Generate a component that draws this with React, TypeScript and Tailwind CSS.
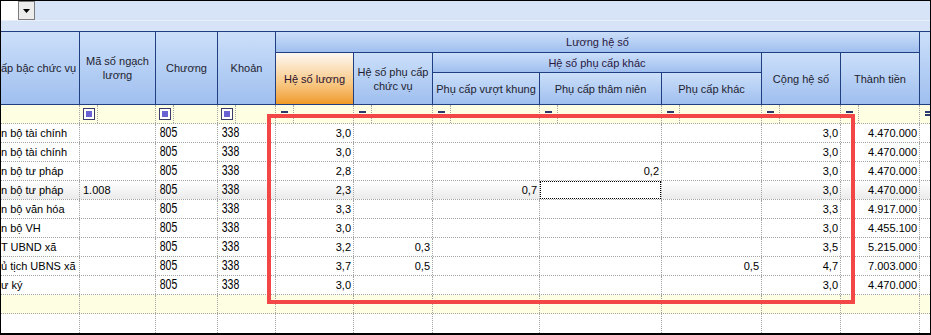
import React from "react";

const W = [
  "w-[79px]",
  "w-[76px]",
  "w-[62px]",
  "w-[58px]",
  "w-[78px]",
  "w-[79px]",
  "w-[107px]",
  "w-[122px]",
  "w-[100px]",
  "w-[79px]",
  "w-[79px]",
];

type Row = {
  name: string;
  ma?: string;
  hsl: string;
  pccv?: string;
  vk?: string;
  tn?: string;
  khac?: string;
  cong: string;
  tien: string;
};

const rows: Row[] = [
  { name: "n bộ tài chính", hsl: "3,0", cong: "3,0", tien: "4.470.000" },
  { name: "n bộ tài chính", hsl: "3,0", cong: "3,0", tien: "4.470.000" },
  { name: "n bộ tư pháp", hsl: "2,8", tn: "0,2", cong: "3,0", tien: "4.470.000" },
  { name: "n bộ tư pháp", ma: "1.008", hsl: "2,3", vk: "0,7", cong: "3,0", tien: "4.470.000" },
  { name: "n bộ văn hóa", hsl: "3,3", cong: "3,3", tien: "4.917.000" },
  { name: "n bộ VH", hsl: "3,0", cong: "3,0", tien: "4.455.100" },
  { name: "T UBND xã", hsl: "3,2", pccv: "0,3", cong: "3,5", tien: "5.215.000" },
  { name: "ủ tịch UBNS xã", hsl: "3,7", pccv: "0,5", khac: "0,5", cong: "4,7", tien: "7.003.000" },
  { name: "ư ký", hsl: "3,0", cong: "3,0", tien: "4.470.000" },
];

const DOT = "border-dotted border-[#a4a4a4]";
const HB =
  "flex items-center justify-center text-center leading-[14px] bg-linear-to-b from-[#cbdff9] to-[#a0bfef] text-[#1e1e30]";

function CheckIcon() {
  return (
    <div className="w-[12px] h-[12px] border border-[#3c3c6a] bg-white flex items-center justify-center">
      <div className="w-[6px] h-[6px] bg-[#6a62d2]" />
    </div>
  );
}

function EqIcon() {
  return (
    <div className="flex flex-col gap-px mt-[-1px]">
      <div className="w-[7px] h-[2px] bg-[#2a3a6e]" />
      <div className="w-[7px] h-[2px] bg-[#2a3a6e]" />
    </div>
  );
}

function FilterCell({ w, icon }: { w: string; icon: "check" | "eq" }) {
  return (
    <div className={`${w} h-full shrink-0 flex border-r ${DOT}`}>
      <div className={`w-[18px] h-full flex items-center justify-center border-r ${DOT}`}>
        {icon === "check" ? <CheckIcon /> : <EqIcon />}
      </div>
    </div>
  );
}

function Num({ w, v }: { w: string; v?: string }) {
  return (
    <div className={`${w} h-full shrink-0 flex items-center justify-end pr-[2px] border-r ${DOT}`}>
      {v}
    </div>
  );
}

function Tall({ w, v }: { w: string; v: string }) {
  return (
    <div className={`${w} h-full shrink-0 border-r ${DOT}`}>
      <div className="text-[14px] leading-[14px] pt-px pl-[5px] scale-x-75 origin-left">{v}</div>
    </div>
  );
}

export default function App() {
  return (
    <div
      className="relative w-[931px] h-[335px] bg-white border border-black border-b-2 overflow-hidden text-[11px] text-black"
      style={{ fontFamily: '"Liberation Sans", Arial, sans-serif' }}
    >
      {/* toolbar strip */}
      <div className="h-[30px] bg-[#d7e4f7] flex flex-col">
        <div className="h-[19px] flex">
          <div className="w-[17px] h-full bg-white" />
          <div className="w-[17px] h-full border border-[#7c7c7c] bg-[#ececec] flex items-center justify-center">
            <svg width="7" height="4" viewBox="0 0 7 4">
              <polygon points="0,0 7,0 3.5,4" fill="#000" />
            </svg>
          </div>
        </div>
        <div className="h-px bg-[#e9f0fa]" />
      </div>

      {/* header */}
      <div className="grid grid-cols-[78px_75px_61px_57px_77px_78px_106px_121px_99px_78px_78px_10px] grid-rows-[20px_19px_31px] gap-px bg-[#1f3f80] py-px">
        <div className={`${HB} col-start-1 row-start-1 row-span-3 justify-start! text-left whitespace-nowrap`}>ấp bậc chức vụ</div>
        <div className={`${HB} col-start-2 row-start-1 row-span-3`}>
          Mã số ngạch
          <br />
          lương
        </div>
        <div className={`${HB} col-start-3 row-start-1 row-span-3`}>Chương</div>
        <div className={`${HB} col-start-4 row-start-1 row-span-3`}>Khoản</div>
        <div className={`${HB} col-start-5 col-span-7 row-start-1 text-[#2a1842]`}>Lương hệ số</div>
        <div className="col-start-5 row-start-2 row-span-2 flex items-center justify-center text-center leading-[14px] bg-linear-to-b from-[#fdf8f2] via-[#f8c883] via-60% to-[#ef9a22] text-[#2a1030]">
          Hệ số lương
        </div>
        <div className={`${HB} col-start-6 row-start-2 row-span-2 whitespace-nowrap`}>
          Hệ số phụ cấp
          <br />
          chức vụ
        </div>
        <div className={`${HB} col-start-7 col-span-3 row-start-2 text-[#2a1842]`}>Hệ số phụ cấp khác</div>
        <div className={`${HB} col-start-7 row-start-3 whitespace-nowrap`}>Phụ cấp vượt khung</div>
        <div className={`${HB} col-start-8 row-start-3 whitespace-nowrap`}>Phụ cấp thâm niên</div>
        <div className={`${HB} col-start-9 row-start-3 whitespace-nowrap`}>Phụ cấp khác</div>
        <div className={`${HB} col-start-10 row-start-2 row-span-2`}>Cộng hệ số</div>
        <div className={`${HB} col-start-11 row-start-2 row-span-2`}>Thành tiền</div>
        <div className={`${HB} col-start-12 row-start-1 row-span-3`} />
      </div>

      {/* filter row */}
      <div className={`flex h-[19px] bg-[#fefee2] border-b ${DOT}`}>
        <div className={`${W[0]} h-full shrink-0 border-r ${DOT}`} />
        <FilterCell w={W[1]} icon="check" />
        <FilterCell w={W[2]} icon="check" />
        <FilterCell w={W[3]} icon="check" />
        <FilterCell w={W[4]} icon="eq" />
        <FilterCell w={W[5]} icon="eq" />
        <FilterCell w={W[6]} icon="eq" />
        <FilterCell w={W[7]} icon="eq" />
        <FilterCell w={W[8]} icon="eq" />
        <FilterCell w={W[9]} icon="eq" />
        <FilterCell w={W[10]} icon="eq" />
        <div className="flex-1 h-full flex">
          <div className={`w-[18px] h-full flex items-center justify-center border-r ${DOT}`}>
            <EqIcon />
          </div>
        </div>
      </div>

      {/* data rows */}
      {rows.map((r, i) => (
        <div
          key={i}
          className={`flex h-[19px] border-b ${DOT} ${i === 3 ? "bg-linear-to-b from-white to-[#ebebeb]" : ""}`}
        >
          <div className={`${W[0]} h-full shrink-0 whitespace-nowrap flex items-center border-r ${DOT}`}>
            <span>{r.name}</span>
          </div>
          <div className={`${W[1]} h-full shrink-0 flex items-center pl-[3px] border-r ${DOT}`}>{r.ma}</div>
          <Tall w={W[2]} v="805" />
          <Tall w={W[3]} v="338" />
          <Num w={W[4]} v={r.hsl} />
          <Num w={W[5]} v={r.pccv} />
          <Num w={W[6]} v={r.vk} />
          {i === 3 ? (
            <div className={`${W[7]} h-full shrink-0 relative border-r ${DOT}`}>
              <div className="absolute inset-0 bg-white border border-dotted border-black" />
            </div>
          ) : (
            <Num w={W[7]} v={r.tn} />
          )}
          <Num w={W[8]} v={r.khac} />
          <Num w={W[9]} v={r.cong} />
          <Num w={W[10]} v={r.tien} />
          <div className="flex-1 h-full" />
        </div>
      ))}

      {/* new row (yellow) */}
      <div className={`flex h-[19px] bg-[#fefee2] border-b ${DOT}`}>
        {W.map((w, k) => (
          <div key={k} className={`${w} h-full shrink-0 border-r ${DOT}`} />
        ))}
        <div className="flex-1 h-full" />
      </div>

      {/* empty white row */}
      <div className="flex h-[19px]">
        {W.map((w, k) => (
          <div key={k} className={`${w} h-full shrink-0 border-r ${DOT}`} />
        ))}
        <div className="flex-1 h-full" />
      </div>

      {/* red annotation rectangle */}
      <div className="absolute left-[266px] top-[113px] w-[588px] h-[190px] border-4 border-[#f34646] pointer-events-none" />
    </div>
  );
}
